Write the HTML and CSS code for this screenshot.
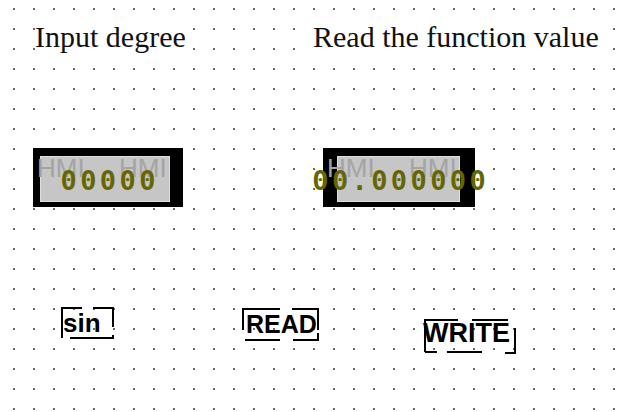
FILE: index.html
```html
<!DOCTYPE html>
<html lang="en">
<head>
    <meta charset="UTF-8">
    <meta name="viewport" content="width=device-width, initial-scale=1.0">
    <title>HMI Screen - Sine</title>
    <link rel="stylesheet" href="styles.css">
</head>
<body>

<div class="canvas">
    <!-- editor grid -->
    <svg class="grid" width="630" height="412">
        <defs>
            <pattern id="dots" x="13" y="8" width="20" height="20" patternUnits="userSpaceOnUse">
                <rect width="2" height="2" fill="#6a6a6a"/>
            </pattern>
        </defs>
        <rect width="630" height="412" fill="url(#dots)"/>
    </svg>

    <span class="label label-in">Input degree</span>
    <span class="label label-out">Read the function value</span>

    <div class="display display-in">
        <div class="panel"></div>
        <span class="mark mark-left">HMI</span>
        <span class="mark mark-right">HMI</span>
        <div class="digits"><span>00000</span></div>
    </div>

    <div class="display display-out">
        <div class="panel"></div>
        <span class="mark mark-left">HMI</span>
        <span class="mark mark-right">HMI</span>
        <div class="digits"><span>00.000000</span></div>
    </div>

    <div class="btn btn-sin">
        <svg class="frame" width="56" height="36">
            <path d="M2,32 V2 H22 M33,2 H53 V21 M10,32 H53 V29"/>
        </svg>
        <span>sin</span>
    </div>

    <div class="btn btn-read">
        <svg class="frame" width="82" height="38">
            <path d="M3,24 V3 H40 M52,3 H78 V24 M5,34 H40 M53,34 H78 V27"/>
        </svg>
        <span>READ</span>
    </div>

    <div class="btn btn-write">
        <svg class="frame" width="100" height="40">
            <path d="M5,36 V4 H38 M52,4 H88 M95,12 V37 H85 M5,36 H17 M27,36 H62"/>
        </svg>
        <span>WRITE</span>
    </div>
</div>

</body>
</html>
```

FILE: styles.css
```css
body {
    margin: 0;
    background-color: #fff;
}

.canvas {
    position: relative;
    width: 630px;
    height: 412px;
    overflow: hidden;
    background-color: #fff;
}

.grid {
    position: absolute;
    left: 0;
    top: 0;
}

/* text labels */
.label {
    position: absolute;
    top: 21px;
    font-family: "Liberation Serif", serif;
    font-size: 30px;
    line-height: 32px;
    color: #111;
    background-color: #fff;
    white-space: nowrap;
}

.label-in {
    left: 35px;
}

.label-out {
    left: 313px;
}

/* numeric displays */
.display {
    position: absolute;
    top: 148px;
    height: 59px;
    background-color: #000;
}

.display-in {
    left: 33px;
    width: 150px;
}

.display-out {
    left: 323px;
    width: 152px;
}

.panel {
    position: absolute;
    top: 8px;
    bottom: 5px;
    background-color: #c6c6c6;
    border: 1px solid #dedede;
    box-sizing: border-box;
}

.display-in .panel {
    left: 7px;
    right: 13px;
}

.display-out .panel {
    left: 14px;
    right: 15px;
}

.mark {
    position: absolute;
    top: 7px;
    font-family: "Liberation Sans", sans-serif;
    font-size: 26px;
    line-height: 1;
    color: #a4a4a4;
}

.mark-left {
    left: 4px;
}

.mark-right {
    left: 86px;
}

.digits {
    position: absolute;
    left: 0;
    right: 0;
    top: 19px;
    display: flex;
    justify-content: center;
    font-family: "DejaVu Sans Mono", monospace;
    font-weight: bold;
    font-size: 27px;
    line-height: 1;
    color: #666600;
    white-space: nowrap;
    font-variant-numeric: slashed-zero;
    font-feature-settings: "zero" 1;
}

.digits span {
    letter-spacing: 3.4px;
    padding-left: 3.4px;
}

/* push buttons */
.btn {
    position: absolute;
    font-family: "Liberation Sans", sans-serif;
    font-weight: bold;
    line-height: 1;
    color: #000;
}

.btn span {
    position: relative;
    display: block;
}

.frame {
    position: absolute;
    left: 0;
    top: 0;
}

.frame path {
    fill: none;
    stroke: #000;
    stroke-width: 2;
}

.btn-sin {
    left: 60px;
    top: 306px;
    width: 56px;
    height: 36px;
    font-size: 26px;
}

.btn-sin span {
    padding: 4px 0 0 3px;
}

.btn-read {
    left: 240px;
    top: 306px;
    width: 82px;
    height: 38px;
    font-size: 25px;
}

.btn-read span {
    padding: 6px 0 0 6px;
}

.btn-write {
    left: 420px;
    top: 316px;
    width: 100px;
    height: 40px;
    font-size: 27px;
}

.btn-write span {
    padding: 4px 0 0 3px;
}
```
